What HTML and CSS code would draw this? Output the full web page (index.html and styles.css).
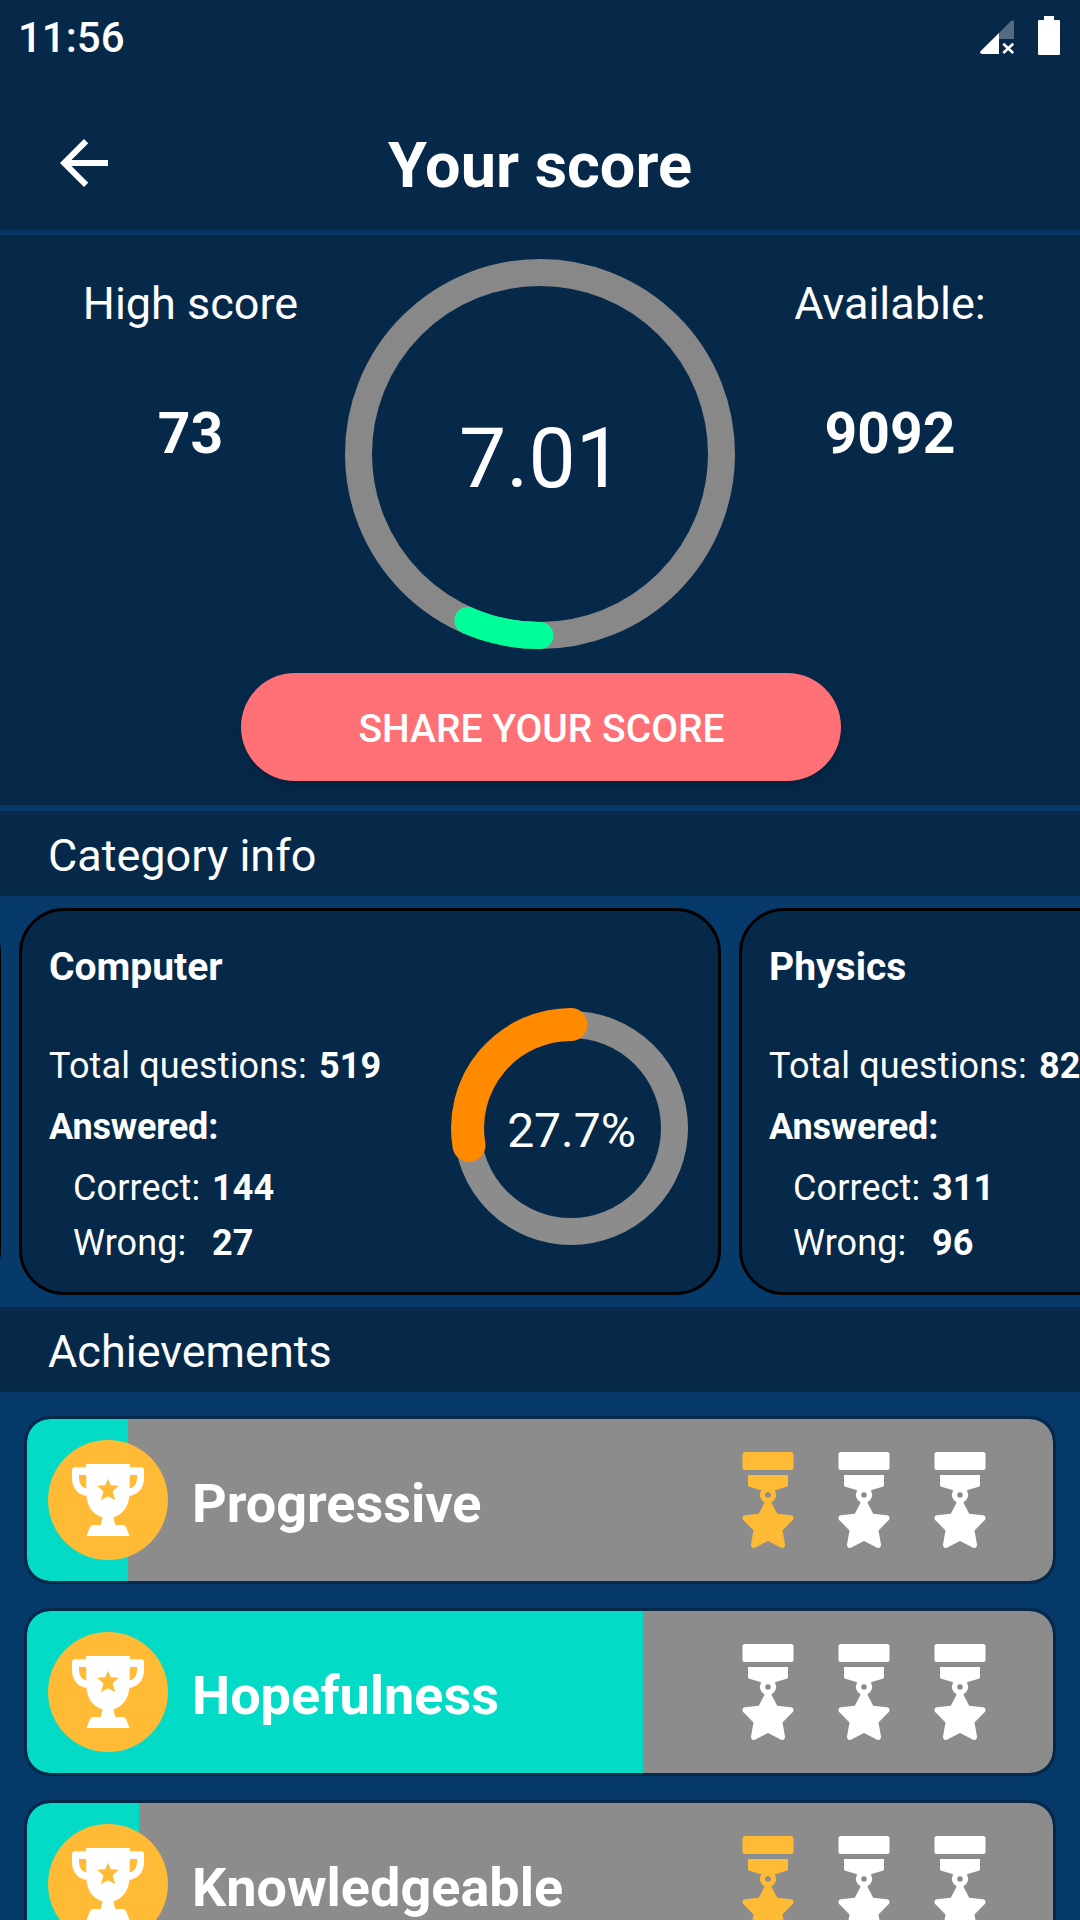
FILE: index.html
```html
<!DOCTYPE html>
<html lang="en">
<head>
<meta charset="utf-8">
<title>Your score</title>
<link rel="stylesheet" href="styles.css">
</head>
<body>
<svg class="sprite" aria-hidden="true">
  <symbol id="trophy" viewBox="0 0 72 72">
    <path fill-rule="evenodd" d="M14.3 0H57.7V3.3H69A3 3 0 0 1 72 6.3V14C72 24 66 31 57.5 31.7C56.5 43 50 51 41.3 53.3L43.3 61H50.5Q53.2 61 54 63L57.5 72H14.5L18 63Q18.800 61 21.500 61H28.700L30.700 53.300C22 51 15 43 14.500 31.700C6 31 0 24 0 14V6.300A3 3 0 0 1 3 3.300H14.300ZM7 11V14C7 19.500 10 23.500 14.300 24.300V11ZM65 11H57.700V24.300C62 23.500 65 19.500 65 14ZM36 14.700L33.300 21.300L25 21.700L31.500 27.300L28.900 36.300L36 32.300L43.300 36.300L40.500 27.300L47 21.700L38.700 21.300Z"/>
  </symbol>
  <symbol id="medal" viewBox="0 0 96 96">
    <rect x="22.500" y="0" width="51" height="18" rx="2.600"/>
    <path fill-rule="evenodd" d="M28 23H68V33Q68 34.300 66.700 34.800L54.700 38.200A8.500 8.500 0 0 1 51.300 50.500L57.200 61.700L71 63.300C73.600 63.600 74.400 66.500 72.600 68.300L62.500 78.500L65 92.500C65.300 95 63.400 96.500 61.200 95.700L48 89L34.800 95.700C32.600 96.500 30.700 95 31 92.500L33.500 78.500L23.400 68.300C21.600 66.500 22.400 63.600 25 63.300L38.800 61.700L44.700 50.500A8.500 8.500 0 0 1 41.300 38.200L29.300 34.800Q28 34.300 28 33ZM48 40.200A2.800 2.800 0 1 0 48 45.800A2.800 2.800 0 1 0 48 40.200Z"/>
  </symbol>
</svg>
<div class="screen">
  <header class="top">
    <div class="status">
      <span class="clock">11:56</span>
      <div class="indicators">
        <svg class="signal" viewBox="0 0 34 34"><path fill="#fff" d="M19 13V34H2Q-1 33 .8 31Z"/><path fill="#566b81" d="M19 13L31 1Q33 -.5 34 1V19H19Z"/><path stroke="#fff" stroke-width="2.600" d="M23.300 23.700L33.200 33M33.200 23.700L23.300 33"/></svg>
        <svg class="battery" viewBox="0 0 22 39"><path fill="#fff" d="M6 0H16V4H21Q22 4 22 5V38Q22 39 21 39H1Q0 39 0 38V5Q0 4 1 4H6Z"/></svg>
      </div>
    </div>
    <div class="bar">
      <svg class="back" viewBox="0 0 24 24"><path fill="#fff" d="M20 11H7.830l5.590-5.590L12 4l-8 8 8 8 1.410-1.410L7.830 13H20v-2z"/></svg>
      <h1 class="title">Your score</h1>
    </div>
  </header>

  <section class="summary">
    <div class="figures">
      <div class="stat high"><div class="label">High score</div><div class="number">73</div></div>
      <div class="ring">
        <svg viewBox="0 0 390 390" fill="none" stroke-width="27">
          <circle cx="195" cy="195" r="181.500" stroke="#888"/>
          <path d="M195 376.500A181.500 181.500 0 0 1 122.900 361.600" stroke="#00ff99" stroke-linecap="round"/>
        </svg>
        <span class="ring-value">7.01</span>
      </div>
      <div class="stat avail"><div class="label">Available:</div><div class="number">9092</div></div>
    </div>
    <button class="share">SHARE YOUR SCORE</button>
  </section>

  <h2 class="heading">Category info</h2>
  <div class="carousel">
    <article class="card"></article>
    <article class="card">
      <div class="facts">
        <h3 class="name">Computer</h3>
        <div class="total"><span>Total questions:</span><b>519</b></div>
        <div class="answered">Answered:</div>
        <div class="detail"><span>Correct:</span><b>144</b></div>
        <div class="detail"><span>Wrong:</span><b>27</b></div>
      </div>
      <div class="ring small">
        <svg viewBox="0 0 240 240" fill="none">
          <circle cx="120" cy="120" r="103.500" stroke="#8c8c8c" stroke-width="27"/>
          <path d="M120 16.500A103.500 103.500 0 0 0 18 137.400" stroke="#ff8a00" stroke-width="33" stroke-linecap="round"/>
        </svg>
        <span class="ring-value">27.7%</span>
      </div>
    </article>
    <article class="card">
      <div class="facts">
        <h3 class="name">Physics</h3>
        <div class="total"><span>Total questions:</span><b>82</b></div>
        <div class="answered">Answered:</div>
        <div class="detail"><span>Correct:</span><b>311</b></div>
        <div class="detail"><span>Wrong:</span><b>96</b></div>
      </div>
    </article>
  </div>

  <h2 class="heading">Achievements</h2>
  <div class="list">
    <div class="row" style="--done:101px">
      <span class="badge"><svg><use href="#trophy"/></svg></span>
      <span class="goal">Progressive</span>
      <div class="medals"><svg class="won"><use href="#medal"/></svg><svg><use href="#medal"/></svg><svg><use href="#medal"/></svg></div>
    </div>
    <div class="row" style="--done:616px">
      <span class="badge"><svg><use href="#trophy"/></svg></span>
      <span class="goal">Hopefulness</span>
      <div class="medals"><svg><use href="#medal"/></svg><svg><use href="#medal"/></svg><svg><use href="#medal"/></svg></div>
    </div>
    <div class="row" style="--done:112px">
      <span class="badge"><svg><use href="#trophy"/></svg></span>
      <span class="goal">Knowledgeable</span>
      <div class="medals"><svg class="won"><use href="#medal"/></svg><svg><use href="#medal"/></svg><svg><use href="#medal"/></svg></div>
    </div>
  </div>
</div>
</body>
</html>
```
FILE: styles.css
```css
* { box-sizing: border-box; }
body { margin: 0; font-family: Roboto, sans-serif; color: #fff; background: #063a6a; }
h1, h2, h3 { margin: 0; }
.sprite { display: none; }
.screen { width: 1080px; height: 1920px; overflow: hidden; background: #063a6a; display: flex; flex-direction: column; }
.screen > * { flex: none; }

.top { height: 229px; background: #06294a; box-shadow: 0 2px 6px rgba(0, 20, 50, .35); }
.status { height: 72px; padding: 0 20px 0 18px; display: flex; justify-content: space-between; }
.clock { font-size: 42px; font-weight: 500; line-height: 75px; }
.indicators { display: flex; gap: 24px; padding-top: 16px; }
.signal { width: 34px; height: 34px; margin-top: 4px; }
.battery { width: 22px; height: 39px; }
.bar { height: 157px; padding: 0 48px; display: grid; grid-template-columns: 72px 1fr 72px; align-items: start; }
.back { width: 72px; height: 72px; margin-top: 55px; }
.title { text-align: center; font-size: 63px; font-weight: 700; line-height: 74px; margin-top: 57px; }

.summary { height: 570px; margin-top: 6px; background: #06294a; padding-top: 24px; }
.figures { height: 390px; display: grid; grid-template-columns: 345px 390px 345px; }
.stat { display: flex; flex-direction: column; align-items: center; padding-top: 18px; }
.high { padding-left: 36px; }
.avail { padding-right: 35px; }
.label { font-size: 45px; line-height: 54px; }
.number { font-size: 57px; font-weight: 700; line-height: 68px; margin-top: 69px; }
.ring { display: grid; place-items: center; width: 390px; height: 390px; }
.ring > * { grid-area: 1 / 1; }
.ring svg { width: 100%; height: 100%; }
.ring-value { font-size: 84px; line-height: 98px; padding: 9px 0 0 2px; }
.share { display: block; width: 600px; height: 108px; margin: 24px 0 0 241px; border: 0; border-radius: 54px; background: #fd7075; color: #fff; font: 500 39px/106px Roboto, sans-serif; padding: 3px 0 0 1px; box-shadow: 0 4px 8px rgba(0, 0, 0, .22); }

.heading { height: 85px; background: #06294a; padding-left: 48px; font-size: 45px; font-weight: 400; line-height: 90px; }
.summary + .heading { margin-top: 6px; }

.carousel { height: 411px; padding-top: 12px; display: flex; gap: 18px; margin-left: -701px; }
.card { flex: none; width: 702px; height: 387px; border: 3px solid #000; border-radius: 45px; background: #06294a; display: flex; justify-content: space-between; padding: 0 27px; }
.facts { font-size: 36px; line-height: 42px; white-space: nowrap; padding-top: 33px; }
.name { font-size: 39px; font-weight: 700; line-height: 46px; }
.total { display: grid; grid-template-columns: 270px auto; margin-top: 55px; letter-spacing: .15px; }
.answered { font-weight: 700; margin-top: 19px; letter-spacing: -.2px; }
.detail { display: grid; grid-template-columns: 139px auto; padding-left: 24px; margin-top: 19px; letter-spacing: .1px; }
.detail + .detail { margin-top: 13px; }
.ring.small { width: 240px; height: 240px; margin-top: 97px; }
.small .ring-value { font-size: 48px; line-height: 56px; padding: 5px 0 0 1px; }

.list { padding: 24px; display: flex; flex-direction: column; gap: 24px; }
.row { height: 168px; border: 3px solid #06294a; border-radius: 26px; display: flex; align-items: flex-start; padding: 21px; background: linear-gradient(90deg, #03dbc7 var(--done), #8c8c8c var(--done)) padding-box; }
.badge { width: 120px; height: 120px; border-radius: 50%; background: #ffbb35; display: grid; place-items: center; }
.badge svg { width: 72px; height: 72px; fill: #fff; }
.goal { font-size: 54px; font-weight: 700; line-height: 63px; margin: 32px 0 0 24px; flex: 1; }
.medals { display: flex; margin: 12px 24px 0 0; }
.medals svg { width: 96px; height: 96px; fill: #fff; }
.medals .won { fill: #ffbb35; }
```
